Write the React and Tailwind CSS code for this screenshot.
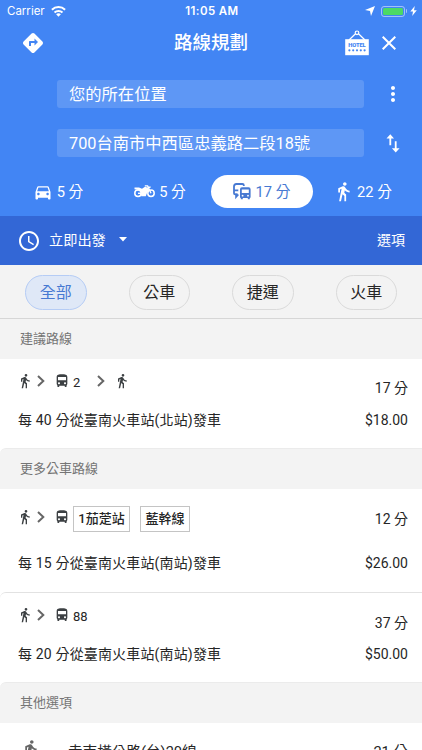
import React from "react";
import {
  MdDirections,
  MdDirectionsCar,
  MdDirectionsBus,
  MdDirectionsWalk,
  MdDirectionsRun,
  MdMoreVert,
  MdAccessTime,
} from "react-icons/md";

function Wifi() {
  return (
    <svg className="h-[11px] w-[15px]" viewBox="0 0 30 22" fill="none" stroke="white" strokeWidth="4">
      <path d="M1.8 7.5a19 19 0 0 1 26.4 0" />
      <path d="M7 13a11.5 11.5 0 0 1 16 0" />
      <path d="M15 21.5l-4.8-4.8a7 7 0 0 1 9.6 0z" fill="white" stroke="none" />
    </svg>
  );
}

function StatusBar() {
  return (
    <div className="grid h-[22px] grid-cols-[1fr_auto_1fr] items-center pl-[7px] pr-[5px] text-white">
      <div className="flex items-center gap-[6px] font-['Inter'] text-[11.5px]">
        <span className="pt-[2px]">Carrier</span>
        <Wifi />
      </div>
      <div className="pt-[1px] font-['Inter'] text-[11.5px] font-semibold tracking-[0.4px]">11:05 AM</div>
      <div className="flex items-center justify-end">
        <svg className="mr-[6px] h-[10px] w-[10px]" viewBox="0 0 10 10" fill="white">
          <path d="M10 0L6 10L5 5L0 4z" />
        </svg>
        <div className="h-[11px] w-[24px] rounded-[3px] border border-white/50 p-[1px]">
          <div className="h-full w-full rounded-[1.5px] bg-[#4cd964]" />
        </div>
        <div className="ml-[1px] h-[4px] w-[1px] rounded-r bg-white/50" />
        <svg className="ml-[3px] h-[10px] w-[7px]" viewBox="0 0 7 10" fill="white">
          <path d="M4.8 0L0.3 5.5H3L2.2 10L6.8 4.2H4z" />
        </svg>
      </div>
    </div>
  );
}

function HotelSign() {
  return (
    <svg className="h-[26px] w-[24px]" viewBox="0 0 24 26">
      <path d="M4 10L11 3.2M20 10L13 3.2" stroke="white" strokeWidth="1.2" />
      <circle cx="12" cy="2.8" r="1.8" fill="none" stroke="white" strokeWidth="1.2" />
      <rect x="0.2" y="9.2" width="23.6" height="16" fill="white" />
      <text x="12" y="17" textAnchor="middle" textLength="17.5" fontFamily="Roboto" fontSize="5.8" fontWeight="900" fill="#4285f4">HOTEL</text>
      <g fill="#4285f4">
        <circle cx="4.4" cy="20.3" r="1.1" />
        <circle cx="8.2" cy="20.3" r="1.1" />
        <circle cx="12" cy="20.3" r="1.1" />
        <circle cx="15.8" cy="20.3" r="1.1" />
        <circle cx="19.6" cy="20.3" r="1.1" />
      </g>
    </svg>
  );
}

function Motorcycle() {
  return (
    <svg className="h-[13px] w-[21px]" viewBox="0 0 21 13" fill="none">
      <circle cx="4" cy="8.3" r="3.2" stroke="white" strokeWidth="1.5" />
      <circle cx="17" cy="8.3" r="3.2" stroke="white" strokeWidth="1.5" />
      <path d="M0.5 2.4L5 2.6L8 3.8L11 1.8L14 2.8L15.3 5L12.8 8.6L11.8 11.2H7.2L6.9 7.5L4.5 4.9L0.5 4.3z" fill="white" />
      <path d="M10.8 0.9H13.6L17 8.3M13.6 3L16.6 1.8" stroke="white" strokeWidth="1.4" />
      <path d="M4 8.3H9" stroke="white" strokeWidth="1.4" />
    </svg>
  );
}

function Transit() {
  return (
    <svg className="h-[17px] w-[18px]" viewBox="0 0 18 17">
      <path d="M10.8 3.1V2.2Q10.8 1 9.4 1H3.4Q1 1 1 3.4V10.2Q1 11.3 2.2 11.3H4.8" fill="none" stroke="#4779d2" strokeWidth="1.8" />
      <path d="M1 7.4H5.3M3 10.5V14.2L5.4 11.5" fill="none" stroke="#4779d2" strokeWidth="1.6" />
      <path fill="#4779d2" fillRule="evenodd" d="M9 4.3H15.6Q17.6 4.3 17.6 6.2V14Q17.6 14.8 16.8 15V16.3H14.8V15H9.8V16.3H7.8V15Q7 14.8 7 14V6.2Q7 4.3 9 4.3zM8.8 6.4V10H15.8V6.4zM8.7 12.7a.9.9 0 1 0 1.8 0a.9.9 0 1 0-1.8 0M14.1 12.7a.9.9 0 1 0 1.8 0a.9.9 0 1 0-1.8 0" />
    </svg>
  );
}

function Chevron() {
  return (
    <svg className="h-[12px] w-[8px] shrink-0" viewBox="0 0 8 12" fill="none" stroke="#666" strokeWidth="2">
      <path d="M1 1L6.3 6L1 11" />
    </svg>
  );
}

function Walk() {
  return <MdDirectionsWalk className="-mx-[3px] size-4 shrink-0 text-[#3c4043]" />;
}

function Bus() {
  return <MdDirectionsBus className="ml-[9px] size-[16px] shrink-0 text-[#3c4043]" />;
}

function Section({ children, divided }) {
  return (
    <div className={divided ? "h-[41px] rounded-tl-md border-t border-[#ebebeb] bg-[#f3f3f3] pl-5 text-[13px] leading-[40px] text-[#757575]" : "h-[40px] bg-[#f3f3f3] pl-5 text-[13px] leading-[40px] text-[#757575]"}>
      {children}
    </div>
  );
}

function Departure({ text, price }) {
  return (
    <div className="flex h-5 items-center justify-between leading-5">
      <span className="tracking-[0.16px]">{text}</span>
      <span>{price}</span>
    </div>
  );
}

export default function App() {
  return (
    <div className="h-[750px] w-[422px] overflow-hidden bg-white font-['Roboto','Noto_Sans_CJK_TC',sans-serif] text-[14px] text-[#262626]">
      <header className="h-[216px] bg-[#4285f4] text-white">
        <StatusBar />
        <div className="grid h-[42px] grid-cols-[1fr_auto_1fr] items-center pl-[21px] pr-[26px]">
          <MdDirections className="size-[24px]" />
          <h1 className="ml-[5px] text-[18.5px] leading-[42px] font-medium">路線規劃</h1>
          <div className="flex items-center justify-end gap-[13px]">
            <HotelSign />
            <svg className="h-[14px] w-[14px]" viewBox="0 0 14 14" stroke="white" strokeWidth="2">
              <path d="M0.7 0.7L13.3 13.3M13.3 0.7L0.7 13.3" />
            </svg>
          </div>
        </div>
        <div className="mt-4 flex h-[28px] items-center pl-[57px]">
          <div className="h-[28px] w-[307px] rounded-[3px] bg-white/15 pl-[12px] text-[16.3px] leading-[30px]">您的所在位置</div>
          <MdMoreVert className="ml-[17px] size-6" />
        </div>
        <div className="mt-[21px] flex h-[28px] items-center pl-[57px]">
          <div className="h-[28px] w-[307px] rounded-[3px] bg-white/15 pl-[12px] text-[16.3px] leading-[30px]">700台南市中西區忠義路二段18號</div>
          <svg className="ml-[22px] h-[19px] w-[14px]" viewBox="0 0 14 19" fill="white">
            <path d="M4.3 0.2L8 4.4H5.2V11.2H3.4V4.4H0.5zM8.8 7.3H10.6V14.2H13.6L9.7 18.4L5.9 14.2H8.8z" />
          </svg>
        </div>
        <div className="mt-[18px] grid h-[33px] grid-cols-4 pr-[7px] pl-[7px] text-[14.7px] leading-[33px]">
          <div className="flex items-center justify-center gap-[4px]">
            <MdDirectionsCar className="size-[20px]" />
            <span className="relative top-[1px]">5 分</span>
          </div>
          <div className="flex items-center justify-center gap-[4px]">
            <Motorcycle />
            <span className="relative top-[1px]">5 分</span>
          </div>
          <div className="flex h-[33px] items-center justify-center gap-[5px] rounded-full bg-white pr-[1px] text-[#4779d2]">
            <Transit />
            <span className="relative top-[1px]">17 分</span>
          </div>
          <div className="flex items-center justify-center gap-[3px] pr-[3px]">
            <MdDirectionsWalk className="size-[21px]" />
            <span className="relative top-[1px]">22 分</span>
          </div>
        </div>
      </header>

      <div className="flex h-[49px] items-center bg-[#3367d6] pl-[17px] pr-[17px] leading-[49px] text-white">
        <MdAccessTime className="size-[24px]" />
        <span className="ml-[8px] text-[14.2px]">立即出發</span>
        <svg className="ml-[13px] h-[5px] w-[8px] -translate-y-[1px]" viewBox="0 0 8 5" fill="white">
          <path d="M0 0H8L4 4.5z" />
        </svg>
        <span className="ml-auto">選項</span>
      </div>

      <div className="flex h-[54px] gap-[42px] border-b border-[#d6d6d6] bg-[#f3f3f3] pt-[10px] pl-[25px] text-center text-[16px] leading-[33px]">
        <div className="h-[35px] w-[61.5px] rounded-full border border-[#b5ccf5] bg-[#dfe8f7] text-[#4779d2]">全部</div>
        <div className="h-[35px] w-[61.5px] rounded-full border border-[#dadada]">公車</div>
        <div className="h-[35px] w-[61.5px] rounded-full border border-[#dadada]">捷運</div>
        <div className="h-[35px] w-[61.5px] rounded-full border border-[#dadada]">火車</div>
      </div>

      <Section>建議路線</Section>
      <div className="h-[89px] pr-[14px] pl-[18px] pt-[12px]">
        <div className="flex h-[34px] items-start justify-between">
          <div className="flex h-5 items-center pl-[2px] pr-1">
            <span className="flex w-[10px]"><Walk /></span>
            <span className="ml-[7px] flex"><Chevron /></span>
            <Bus />
            <span className="mt-[3px] ml-[3px] text-[13px] leading-5">2</span>
            <span className="ml-[17px] flex"><Chevron /></span>
            <span className="ml-[12px] flex w-[10px]"><Walk /></span>
          </div>
          <span className="mt-[7px] leading-5">17 分</span>
        </div>
        <div className="mt-[5px]"><Departure text="每 40 分從臺南火車站(北站)發車" price="$18.00" /></div>
      </div>

      <Section divided>更多公車路線</Section>
      <div className="h-[103px] pr-[14px] pl-[18px] pt-[17px]">
        <div className="flex h-[34px] items-start justify-between">
          <div className="flex pl-[2px]">
            <div className="flex h-[22px] items-center">
              <span className="flex w-[10px]"><Walk /></span>
              <span className="ml-[7px] flex"><Chevron /></span>
              <Bus />
            </div>
            <div className="ml-[3px] flex gap-[10px] text-[13px] leading-[24px] font-medium">
              <span className="h-[26px] w-[57px] border border-[#c4c4c4] text-center">1茄萣站</span>
              <span className="h-[26px] w-[50px] border border-[#c4c4c4] text-center">藍幹線</span>
            </div>
          </div>
          <span className="mt-[3px] leading-5">12 分</span>
        </div>
        <div className="mt-[13px]"><Departure text="每 15 分從臺南火車站(南站)發車" price="$26.00" /></div>
      </div>
      <div className="h-[90px] rounded-tl-md border-t border-[#e2e2e2] pr-[14px] pl-[18px] pt-[12px]">
        <div className="flex h-[34px] items-start justify-between">
          <div className="flex h-5 items-center pl-[2px]">
            <span className="flex w-[10px]"><Walk /></span>
            <span className="ml-[7px] flex"><Chevron /></span>
            <Bus />
            <span className="mt-[3px] ml-[3px] text-[13px] leading-5">88</span>
          </div>
          <span className="mt-[8px] leading-5">37 分</span>
        </div>
        <div className="mt-[5px]"><Departure text="每 20 分從臺南火車站(南站)發車" price="$50.00" /></div>
      </div>

      <Section divided>其他選項</Section>
      <div className="flex h-[60px] items-start pt-[16px] pr-[14px] pl-[20px]">
        <MdDirectionsRun className="size-[21px] text-[#666]" />
        <span className="mt-[3px] ml-[27px] text-[14.6px] leading-5">走南橫公路(台)20線</span>
        <span className="mt-[3px] ml-auto text-[14.6px] leading-5">21 分</span>
      </div>
    </div>
  );
}
